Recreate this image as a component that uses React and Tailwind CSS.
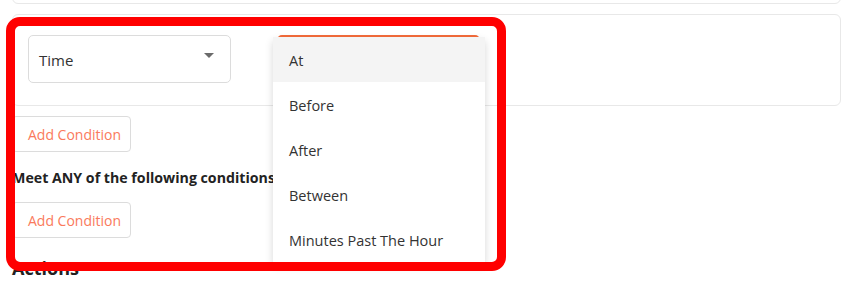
import React from 'react';

const timeOptions = ['At', 'Before', 'After', 'Between', 'Minutes Past The Hour'];

const AddConditionButton = () => (
  <button className="h-9 w-[119px] rounded-[4px] border border-[#dcdcdc] bg-white text-left pl-[15px] text-[14px] text-[#fa7a5c]">
    Add Condition
  </button>
);

const App = () => {
  return (
    <div className="relative h-[281px] w-[848px] overflow-hidden bg-white font-['Open_Sans',sans-serif] text-[#222]">
      <div className="px-3">
        {/* previous card, only its bottom edge shows */}
        <div className="-mt-10 h-[44px] rounded-[6px] border border-[#e8e8e8] w-[829px]" />

        {/* condition row card */}
        <div className="mt-[10px] w-[829px] rounded-[6px] border border-[#e8e8e8] px-[15px] pt-5 pb-[22px]">
          <div className="flex gap-[46px]">
            <div className="flex h-12 w-[203px] items-center justify-between rounded-[5px] border border-[#dcdcdc] pl-[10px] pr-[16px]">
              <span className="mt-[2px] text-[15px] text-[#333]">Time</span>
              <svg width="10" height="5" viewBox="0 0 10 5" className="-mt-2">
                <path d="M0 0h10L5 5z" fill="#6b6b6b" />
              </svg>
            </div>
            <div className="relative h-12 w-[203px] rounded-[5px] border-2 border-[#f26b3a]">
              {/* open dropdown menu */}
              <div className="absolute left-[-6px] top-0 z-10 w-[212px] bg-white shadow-[0_4px_8px_rgba(0,0,0,0.16)]">
                {timeOptions.map((opt, i) => (
                  <div
                    key={opt}
                    className={`flex h-[45px] items-center pl-[16px] pt-[3px] text-[14.5px] text-[#333] ${i === 0 ? 'bg-[#f4f4f4]' : 'bg-white'}`}
                  >
                    {opt}
                  </div>
                ))}
              </div>
            </div>
          </div>
        </div>

        <div className="mt-[10px]">
          <AddConditionButton />
        </div>
        <div className="mt-[15px] text-[14.2px] font-bold leading-[22px] text-[#222]">
          Meet ANY of the following conditions
        </div>
        <div className="mt-[13px]">
          <AddConditionButton />
        </div>
        <div className="mt-[18px] text-[18px] font-bold leading-6 text-[#222]">Actions</div>
      </div>

      {/* red highlight frame */}
      <div className="pointer-events-none absolute left-[6px] top-[17px] z-20 h-[254px] w-[500px] rounded-[14px] border-[9px] border-[#ff0000]" />
    </div>
  );
};

export default App;
